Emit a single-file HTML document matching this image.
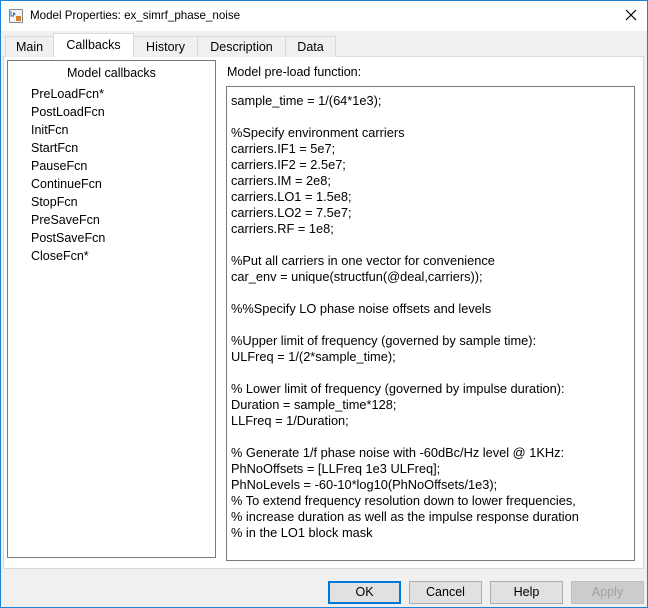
<!DOCTYPE html>
<html><head><style>
*{margin:0;padding:0;box-sizing:border-box}
body{width:648px;height:608px;background:#f0f0f0;font-family:"Liberation Sans",sans-serif;font-size:12px;color:#000;position:relative;overflow:hidden}
.win{position:absolute;left:0;top:0;width:648px;height:608px;border:1px solid #1883d7;border-top:none}
.title{position:absolute;left:0;top:0;width:648px;height:31px;background:#fff;border-top:1px solid #1883d7}
.title span{position:absolute;left:30px;top:8px;font-size:11.6px}
.ab{position:absolute}
.tab{position:absolute;top:36px;height:21px;border:1px solid #d9d9d9;border-bottom:none;background:#f0f0f0;text-align:center;line-height:20px;font-size:12.5px}
.panel{position:absolute;left:3px;top:56px;width:641px;height:513px;background:#fff;border:1px solid #d9d9d9}
.list{position:absolute;left:7px;top:60px;width:209px;height:498px;border:1px solid #7a7a7a;background:#fff}
.list div{position:absolute;left:23px;font-size:12.5px}
.code{position:absolute;left:226px;top:86px;width:409px;height:475px;border:1px solid #7a7a7a;background:#fff;padding:6px 0 0 4px;font-size:12.8px;line-height:16px;white-space:pre}
.btn{position:absolute;top:581px;height:23px;width:73px;border:1px solid #adadad;background:#e1e1e1;text-align:center;line-height:21px;font-size:12.5px}
</style></head><body>
<div class="title"><span>Model Properties: ex_simrf_phase_noise</span>
<svg class="ab" style="left:9px;top:8px" width="14" height="14"><rect x="0.5" y="0.5" width="13" height="13" fill="#f4f4f4" stroke="#888"/><path d="M2 2v5h3" stroke="#3a70c0" fill="none"/><path d="M4 3l3 2-3 2z" fill="#3a70c0"/><rect x="7" y="7" width="5" height="5" fill="#d9822b"/></svg>
<svg class="ab" style="left:625px;top:8px" width="12" height="12"><path d="M1 1L11 11M11 1L1 11" stroke="#000" stroke-width="1.2"/></svg>
</div>
<div class="panel"></div>
<div class="tab" style="left:5px;width:49px">Main</div>
<div class="tab" style="left:133px;width:65px">History</div>
<div class="tab" style="left:197px;width:89px">Description</div>
<div class="tab" style="left:285px;width:51px">Data</div>
<div class="tab" style="left:53px;top:33px;height:24px;width:81px;background:#fff;line-height:23px">Callbacks</div>
<div class="list">
<div style="left:59px;top:5px">Model callbacks</div>
<div style="top:26px">PreLoadFcn*</div>
<div style="top:44px">PostLoadFcn</div>
<div style="top:62px">InitFcn</div>
<div style="top:80px">StartFcn</div>
<div style="top:98px">PauseFcn</div>
<div style="top:116px">ContinueFcn</div>
<div style="top:134px">StopFcn</div>
<div style="top:152px">PreSaveFcn</div>
<div style="top:170px">PostSaveFcn</div>
<div style="top:188px">CloseFcn*</div>
</div>
<div class="ab" style="left:227px;top:65px;font-size:12.5px">Model pre-load function:</div>
<div class="code">sample_time = 1/(64*1e3);

%Specify environment carriers
carriers.IF1 = 5e7;
carriers.IF2 = 2.5e7;
carriers.IM = 2e8;
carriers.LO1 = 1.5e8;
carriers.LO2 = 7.5e7;
carriers.RF = 1e8;

%Put all carriers in one vector for convenience
car_env = unique(structfun(@deal,carriers));

%%Specify LO phase noise offsets and levels

%Upper limit of frequency (governed by sample time):
ULFreq = 1/(2*sample_time);

% Lower limit of frequency (governed by impulse duration):
Duration = sample_time*128;
LLFreq = 1/Duration;

% Generate 1/f phase noise with -60dBc/Hz level @ 1KHz:
PhNoOffsets = [LLFreq 1e3 ULFreq];
PhNoLevels = -60-10*log10(PhNoOffsets/1e3);
% To extend frequency resolution down to lower frequencies,
% increase duration as well as the impulse response duration
% in the LO1 block mask</div>
<div class="btn" style="left:328px;border:2px solid #0078d7;line-height:19px">OK</div>
<div class="btn" style="left:409px">Cancel</div>
<div class="btn" style="left:490px">Help</div>
<div class="btn" style="left:571px;color:#a0a0a0;background:#cccccc;border-color:#bfbfbf">Apply</div>
<div class="win"></div>
</body></html>
